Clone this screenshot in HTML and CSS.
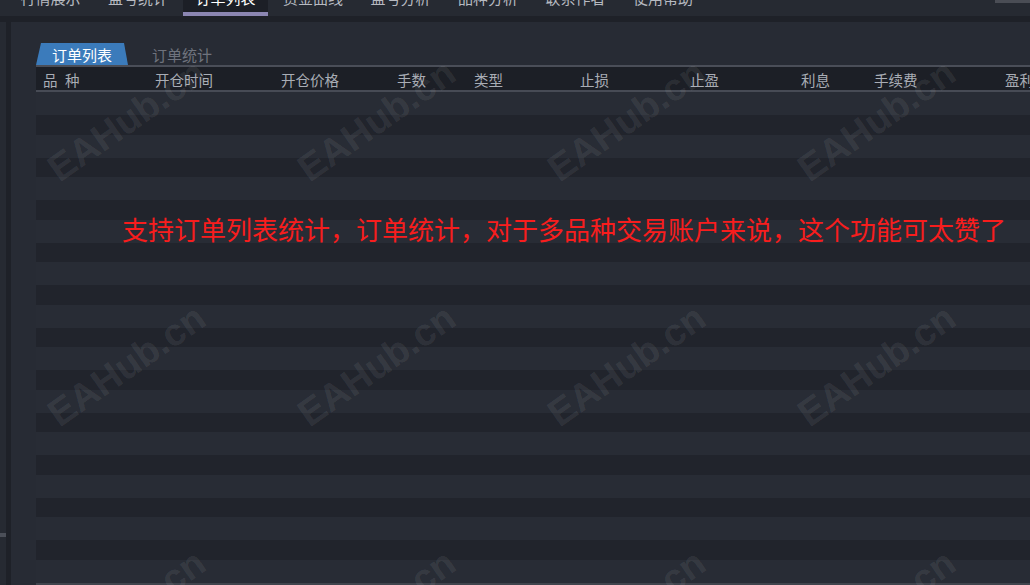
FILE: index.html
```html
<!DOCTYPE html>
<html lang="zh">
<head>
<meta charset="utf-8">
<title>订单列表</title>
<link rel="stylesheet" href="styles.css">
</head>
<body>
<div class="app">
  <nav class="nav">
    <a class="nav-item"><span class="nav-label">行情展示</span></a>
    <a class="nav-item"><span class="nav-label">盈亏统计</span></a>
    <a class="nav-item active"><span class="nav-label">订单列表</span></a>
    <a class="nav-item"><span class="nav-label">资金曲线</span></a>
    <a class="nav-item"><span class="nav-label">盈亏分析</span></a>
    <a class="nav-item"><span class="nav-label">品种分析</span></a>
    <a class="nav-item"><span class="nav-label">联系作者</span></a>
    <a class="nav-item"><span class="nav-label">使用帮助</span></a>
    <div class="win-ctl"></div>
  </nav>
  <div class="nav-shadow"></div>
  <div class="content">
    <aside class="side"><div class="side-mark"></div></aside>
    <div class="divider"></div>
    <main class="main">
      <div class="tabs">
        <div class="tab active">订单列表</div>
        <div class="tab">订单统计</div>
      </div>
      <div class="table">
        <div class="thead">
          <div class="th sym">品种</div>
          <div class="th">开仓时间</div>
          <div class="th">开仓价格</div>
          <div class="th">手数</div>
          <div class="th">类型</div>
          <div class="th">止损</div>
          <div class="th">止盈</div>
          <div class="th">利息</div>
          <div class="th">手续费</div>
          <div class="th">盈利</div>
        </div>
        <div class="tbody">
          <div class="row odd"></div><div class="row even"></div>
          <div class="row odd"></div><div class="row even"></div>
          <div class="row odd"></div><div class="row even"></div>
          <div class="row odd"></div><div class="row even"></div>
          <div class="row odd"></div><div class="row even"></div>
          <div class="row odd"></div><div class="row even"></div>
          <div class="row odd"></div><div class="row even"></div>
          <div class="row odd"></div><div class="row even"></div>
          <div class="row odd"></div><div class="row even"></div>
          <div class="row odd"></div><div class="row even"></div>
          <div class="row odd"></div><div class="row even"></div>
          <div class="row odd"></div>
        </div>
      </div>
    </main>
  </div>

  <div class="watermarks" aria-hidden="true">
    <span class="wm wm-r1 wm-c1">EAHub.cn</span>
    <span class="wm wm-r1 wm-c2">EAHub.cn</span>
    <span class="wm wm-r1 wm-c3">EAHub.cn</span>
    <span class="wm wm-r1 wm-c4">EAHub.cn</span>
    <span class="wm wm-r2 wm-c1">EAHub.cn</span>
    <span class="wm wm-r2 wm-c2">EAHub.cn</span>
    <span class="wm wm-r2 wm-c3">EAHub.cn</span>
    <span class="wm wm-r2 wm-c4">EAHub.cn</span>
    <span class="wm wm-r3 wm-c1">EAHub.cn</span>
    <span class="wm wm-r3 wm-c2">EAHub.cn</span>
    <span class="wm wm-r3 wm-c3">EAHub.cn</span>
    <span class="wm wm-r3 wm-c4">EAHub.cn</span>
  </div>

  <div class="note">支持订单列表统计，订单统计，对于多品种交易账户来说，这个功能可太赞了</div>
</div>
</body>
</html>
```

FILE: styles.css
```css
* { box-sizing: border-box; }

html, body {
  margin: 0;
  padding: 0;
  background: #272b34;
  overflow: hidden;
}

.app {
  position: relative;
  width: 1030px;
  height: 585px;
  overflow: hidden;
  font-family: "Noto Sans CJK SC", "Noto Sans", sans-serif;
  background: #272b34;
}

/* ---------- top nav ---------- */
.nav {
  display: flex;
  align-items: flex-start;
  height: 16px;
  padding-left: 8px;
  gap: 2.5px;
  background: #262a32;
  overflow: hidden;
}

.nav-item {
  display: block;
  width: 85px;
  height: 16px;
  overflow: hidden;
  color: #b7bac1;
  text-decoration: none;
}

.nav-item.active {
  height: 16px;
  background: #1c1f26;
  border-bottom: 4px solid #8b86b2;
  color: #ffffff;
}

.nav-label {
  display: block;
  margin-top: -10px;
  font-size: 15px;
  line-height: 15px;
  text-align: center;
  white-space: nowrap;
}

.win-ctl {
  margin-left: auto;
  width: 35px;
  height: 3px;
  background: #4a4d55;
}

.nav-shadow {
  height: 6px;
  background: #1e2128;
}

/* ---------- content ---------- */
.content {
  display: flex;
  height: 563px;
}

.side {
  width: 6px;
  background: #262a32;
  padding-top: 511px;
}

.side-mark {
  height: 4px;
  background: #4b4f58;
}

.divider {
  width: 5px;
  background: #1e2128;
}

.main {
  flex: 1;
  min-width: 0;
  padding: 21px 0 0 25px;
  overflow: hidden;
  background: #272b34;
}

/* ---------- tabs ---------- */
.tabs {
  display: flex;
  height: 24px;
  border-bottom: 2px solid #4a4e58;
  width: 1100px;
}

.tab {
  height: 22px;
  padding: 2px 8px 0;
  margin-left: 16px;
  font-size: 15px;
  line-height: 20px;
  color: #6f737d;
  white-space: nowrap;
}

.tab.active {
  width: 92px;
  margin-left: 0;
  padding: 2px 0 0;
  text-align: center;
  color: #ffffff;
  background: #3b7bbb;
  clip-path: polygon(5px 0, 88px 0, 100% 100%, 0 100%);
}

/* ---------- table ---------- */
.table {
  width: 1100px;
  border-bottom: 3px solid #40444d;
}

.thead {
  display: grid;
  grid-template-columns: 112px 126px 116px 77px 106px 110px 111px 73px 131px 1fr;
  height: 25px;
  padding: 2px 0 0 7px;
  background: #1c1f26;
  border-bottom: 2px solid #474b55;
}

.th {
  font-size: 14.5px;
  line-height: 21px;
  color: #a9adb5;
  white-space: nowrap;
}

.th.sym {
  letter-spacing: 7.5px;
}

.tbody {
  display: flex;
  flex-direction: column;
}

.row.odd {
  height: 23px;
  background: #282c35;
}

.row.even {
  height: 19.5px;
  background: #21242c;
}

/* ---------- overlays ---------- */
.watermarks {
  position: absolute;
  inset: 0;
  pointer-events: none;
}

.wm {
  position: absolute;
  font-family: "Liberation Sans", Arial, sans-serif;
  font-weight: bold;
  font-size: 38px;
  line-height: 38px;
  color: rgba(255, 255, 255, 0.085);
  white-space: nowrap;
  transform-origin: left bottom;
  transform: rotate(-35deg);
}

.wm-c1 { left: 63px; }
.wm-c2 { left: 313px; }
.wm-c3 { left: 563px; }
.wm-c4 { left: 813px; }

.wm-r1 { top: 150px; }
.wm-r2 { top: 395px; }
.wm-r3 { top: 640px; }

.note {
  position: absolute;
  left: 122px;
  top: 216px;
  font-family: "Noto Sans CJK SC", sans-serif;
  font-size: 26px;
  line-height: 26px;
  color: #f81d1d;
  white-space: nowrap;
}
```
